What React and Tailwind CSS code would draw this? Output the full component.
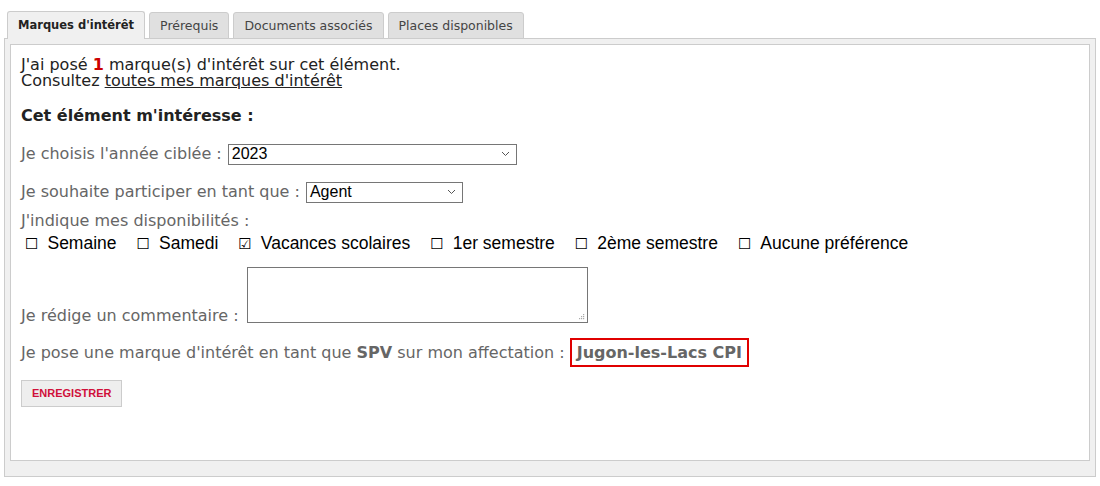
import React from "react";

const V = { fontFamily: '"DejaVu Sans", Verdana, sans-serif' };
const A = { fontFamily: '"Liberation Sans", Arial, sans-serif' };

function Chevron() {
  return (
    <svg width="9" height="6" viewBox="0 0 9 6" className="shrink-0">
      <path d="M1 1 L4.5 4.5 L8 1" fill="none" stroke="#555" strokeWidth="1" />
    </svg>
  );
}

function Select({ value, width }) {
  return (
    <div
      className="inline-flex h-[21px] shrink-0 items-center justify-between border border-[#767676] bg-white pl-[3px] pr-[6px] text-[16px] leading-none text-black"
      style={{ ...A, width }}
    >
      <span>{value}</span>
      <Chevron />
    </div>
  );
}

function Check({ label, checked }) {
  return (
    <span className="inline-flex h-[20px] items-center gap-[9px] text-[17.5px] leading-none text-black" style={A}>
      <span className="text-[15px] text-black" style={V}>{checked ? "☑" : "☐"}</span>
      <span>{label}</span>
    </span>
  );
}

export default function App() {
  const tabs = ["Prérequis", "Documents associés", "Places disponibles"];
  return (
    <div className="w-[1100px] h-[486px] bg-white pt-[11px] px-[4px]" style={V}>
      <div className="flex items-end gap-[4px] pl-[3px] h-[28px]">
        <div className="relative z-10 flex h-[28px] items-center rounded-t-[3px] border border-b-0 border-[#cccccc] bg-[#f0f0f0] px-[10px] pt-[1px] text-[11.5px] font-bold text-[#222]">
          Marques d'intérêt
        </div>
        {tabs.map((t) => (
          <div
            key={t}
            className="flex h-[27px] items-center rounded-t-[3px] border border-[#cccccc] bg-[#e0e0e0] px-[10px] pt-[2px] text-[12.5px] text-[#444]"
          >
            {t}
          </div>
        ))}
      </div>
      <div className="-mt-px h-[439px] border border-[#cccccc] bg-[#f0f0f0] p-[5px]">
        <div className="h-[417px] border border-[#cccccc] bg-white px-[10px] pt-[12px] text-[16px]">
          <div className="leading-[16px] text-[#222]">
            <div>
              J'ai posé <span className="font-bold text-[#cc0000]">1</span> marque(s) d'intérêt sur cet élément.
            </div>
            <div>
              Consultez <span className="underline">toutes mes marques d'intérêt</span>
            </div>
          </div>
          <div className="mt-[15px] font-bold text-[#222]">Cet élément m'intéresse :</div>
          <div className="mt-[14px] flex items-center gap-[6px] text-[#666]">
            <span>Je choisis l'année ciblée :</span>
            <Select value="2023" width={289} />
          </div>
          <div className="mt-[14px] flex items-center gap-[6px] text-[#666]">
            <span>Je souhaite participer en tant que :</span>
            <Select value="Agent" width={157} />
          </div>
          <div className="mt-[5px] text-[#666]">J'indique mes disponibilités :</div>
          <div className="mt-[1px] flex items-center gap-[20px] pl-[4px]">
            <Check label="Semaine" />
            <Check label="Samedi" />
            <Check label="Vacances scolaires" checked />
            <Check label="1er semestre" />
            <Check label="2ème semestre" />
            <Check label="Aucune préférence" />
          </div>
          <div className="mt-[13px] flex items-end gap-[8px] text-[#666]">
            <span className="-mb-[5px]">Je rédige un commentaire :</span>
            <div className="relative h-[56px] w-[341px] border border-[#767676] bg-white">
              <svg className="absolute bottom-[2px] right-[2px]" width="7" height="7" viewBox="0 0 7 7">
                <rect x="5" y="1" width="1.2" height="1.2" fill="#aaa" />
                <rect x="3" y="3" width="1.2" height="1.2" fill="#aaa" />
                <rect x="5" y="3" width="1.2" height="1.2" fill="#aaa" />
                <rect x="1" y="5" width="1.2" height="1.2" fill="#aaa" />
                <rect x="3" y="5" width="1.2" height="1.2" fill="#aaa" />
                <rect x="5" y="5" width="1.2" height="1.2" fill="#aaa" />
              </svg>
            </div>
          </div>
          <div className="mt-[15px] flex items-center text-[#666]">
            <span>
              Je pose une marque d'intérêt en tant que <span className="font-bold">SPV</span> sur mon affectation :
            </span>
            <span className="ml-[5px] flex h-[29px] items-center border-2 border-[#e00000] px-[5px] font-bold text-[#666]">
              Jugon-les-Lacs CPI
            </span>
          </div>
          <div className="mt-[13px]">
            <button
              className="h-[27px] border border-[#cccccc] bg-[#eeeeee] px-[10px] text-[11px] font-bold text-[#d0103a]"
              style={A}
            >
              ENREGISTRER
            </button>
          </div>
        </div>
      </div>
    </div>
  );
}
